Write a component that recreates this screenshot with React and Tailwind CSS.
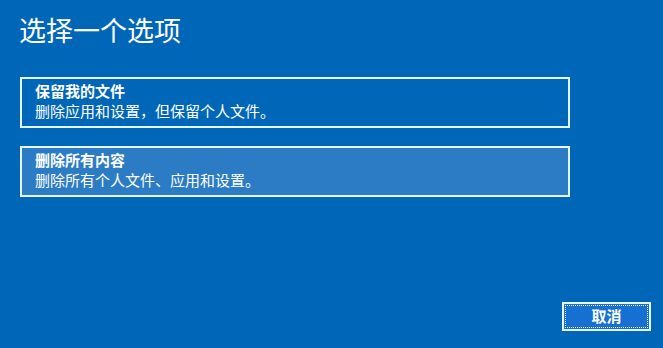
import React from "react";

const font = { fontFamily: '"Noto Sans CJK SC", "Noto Sans", sans-serif' };

const Option = ({ title, desc, active }) => (
  <div
    className={`w-[550px] h-[51px] border-2 border-[#e4f6ff] pl-[13px] pt-[2px] text-white ${
      active ? "bg-[#2b7cc4]" : "bg-transparent"
    }`}
  >
    <div className="text-[15px] leading-[20px] font-bold">{title}</div>
    <div className="text-[15px] leading-[20px]">{desc}</div>
  </div>
);

export default function App() {
  return (
    <div
      className="w-[663px] h-[348px] bg-[#0067b8] flex flex-col overflow-hidden"
      style={font}
    >
      <h1 className="pl-[19px] pt-[14px] text-[27px] leading-[32px] text-white font-normal">
        选择一个选项
      </h1>

      {/* 选项 */}
      <div className="flex flex-col gap-[18px] pl-[20px] mt-[31px]">
        <Option title="保留我的文件" desc="删除应用和设置，但保留个人文件。" />
        <Option title="删除所有内容" desc="删除所有个人文件、应用和设置。" active />
      </div>

      {/* キャンセル */}
      <div className="mt-auto flex justify-end pr-[12px] pb-[17px]">
        <button className="w-[89px] h-[29px] border-2 border-[#e4f6ff] bg-[#1670d2] p-[1px]">
          <span className="flex h-full w-full items-center justify-center border border-dotted border-white text-[15px] font-bold text-white">
            取消
          </span>
        </button>
      </div>
    </div>
  );
}
